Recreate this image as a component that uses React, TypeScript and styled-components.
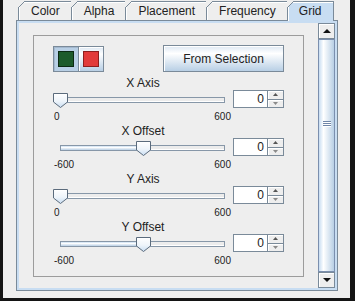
import styled, { createGlobalStyle } from "styled-components"

const OUTLINE = "#7a8a99"

type SliderSpec = {
    label: string,
    min: number,
    max: number,
    value: number
}

const tabs = ["Color", "Alpha", "Placement", "Frequency", "Grid"]
const activeTab = "Grid"

const sliders: SliderSpec[] = [
    { label: "X Axis", min: 0, max: 600, value: 0 },
    { label: "X Offset", min: -600, max: 600, value: 0 },
    { label: "Y Axis", min: 0, max: 600, value: 0 },
    { label: "Y Offset", min: -600, max: 600, value: 0 },
]

const GlobalStyle = createGlobalStyle`
    html, body {
        margin: 0;
        padding: 0;
        background: #eeeeee;
    }
    body {
        font-family: "Liberation Sans", Arial, sans-serif;
        font-size: 12px;
        color: #222222;
    }
`

function SliderThumb() {
    return (
        <svg width="15" height="15" viewBox="0 0 15 15">
            <defs>
                <linearGradient id="thumbFill" x1="0" y1="0" x2="0" y2="1">
                    <stop offset="0" stopColor="#ffffff" />
                    <stop offset="0.55" stopColor="#eef4fa" />
                    <stop offset="1" stopColor="#c8ddf2" />
                </linearGradient>
            </defs>
            <path d="M0.5 0.5 H14.5 V9 L7.5 14.5 L0.5 9 Z" fill="url(#thumbFill)" stroke="#5b6b7c" />
            <path d="M1.5 1.5 H13.5" stroke="#ffffff" />
        </svg>
    )
}

function Arrow({ up, size, color }: Readonly<{ up: boolean, size: number, color: string }>) {
    const h = Math.ceil(size / 2)
    return (
        <svg width={size} height={h} viewBox={`0 0 ${size} ${h}`}>
            <path d={up ? `M0 ${h} L${size / 2} 0 L${size} ${h} Z` : `M0 0 L${size / 2} ${h} L${size} 0 Z`} fill={color} />
        </svg>
    )
}

function Slider({ min, max, value }: Readonly<SliderSpec>) {
    const pct = (value - min) / (max - min)
    return (
        <SliderBox>
            <Track>
                <TrackFill style={{ width: `${pct * 100}%` }} />
            </Track>
            <ThumbSlot style={{ left: `calc(${pct} * (100% - 15px))` }}>
                <SliderThumb />
            </ThumbSlot>
        </SliderBox>
    )
}

function Spinner({ value }: Readonly<{ value: number }>) {
    return (
        <SpinnerBox>
            <SpinnerField>{value}</SpinnerField>
            <SpinnerButtons>
                <SpinButton><Arrow up={true} size={5} color="#555555" /></SpinButton>
                <SpinButton><Arrow up={false} size={5} color="#8a8a8a" /></SpinButton>
            </SpinnerButtons>
        </SpinnerBox>
    )
}

function App() {
    return (
        <Frame>
            <GlobalStyle />
            <Body>
                <EdgeV $w={3} />
                <Main>
                    <TabRow>
                        {tabs.map(t => (
                            <Tab key={t} $active={t === activeTab}>{t}</Tab>
                        ))}
                    </TabRow>
                    <TabPanel>
                        <ScrollPane>
                            <Viewport>
                                <GroupBox>
                                    <TopRow>
                                        <SwatchGroup>
                                            <SwatchButton $selected={true}>
                                                <Swatch $color="#1c5b2b" $edge="#0b2a13" />
                                            </SwatchButton>
                                            <SwatchButton>
                                                <Swatch $color="#e23a3a" $edge="#8c1e1e" />
                                            </SwatchButton>
                                        </SwatchGroup>
                                        <PushButton>From Selection</PushButton>
                                    </TopRow>
                                    {sliders.map(s => (
                                        <SliderRow key={s.label}>
                                            <RowLabel>{s.label}</RowLabel>
                                            <Slider {...s} />
                                            <Spinner value={s.value} />
                                            <TickLabels>
                                                <span>{s.min}</span>
                                                <span>{s.max}</span>
                                            </TickLabels>
                                        </SliderRow>
                                    ))}
                                </GroupBox>
                            </Viewport>
                            <ScrollBar>
                                <ScrollArrow><Arrow up={true} size={8} color="#111111" /></ScrollArrow>
                                <ScrollTrack>
                                    <ScrollThumb>
                                        <Grip />
                                        <Grip />
                                        <Grip />
                                    </ScrollThumb>
                                </ScrollTrack>
                                <ScrollArrow><Arrow up={false} size={8} color="#111111" /></ScrollArrow>
                            </ScrollBar>
                        </ScrollPane>
                    </TabPanel>
                </Main>
                <EdgeV $w={5} />
            </Body>
            <EdgeH />
        </Frame>
    )
}

const Frame = styled.div`
    width: 355px;
    height: 301px;
    display: flex;
    flex-direction: column;
    background: #eeeeee;
    overflow: hidden;
`

const Body = styled.div`
    flex: 1;
    display: flex;
    min-height: 0;
`

const EdgeV = styled.div<{ $w: number }>`
    width: ${({ $w }) => $w}px;
    background: #141414;
    flex-shrink: 0;
`

const EdgeH = styled.div`
    height: 3px;
    background: #141414;
    flex-shrink: 0;
`

const Main = styled.div`
    flex: 1;
    display: flex;
    flex-direction: column;
    padding: 1px 12px 7px 13px;
    min-width: 0;
`

const TabRow = styled.div`
    display: flex;
    align-items: flex-start;
    height: 19px;
    padding-left: 2px;
    position: relative;
    z-index: 1;
`

const Tab = styled.div<{ $active?: boolean }>`
    position: relative;
    box-sizing: border-box;
    height: ${({ $active }) => $active ? 20 : 19}px;
    display: flex;
    align-items: center;
    padding: ${({ $active }) => $active ? "0 12px 0 11px" : "0 11px 0 12px"};
    margin-right: -1px;
    border: 1px solid ${OUTLINE};
    border-bottom: none;
    background: ${({ $active }) => $active ? "#c8ddf2" : "#eeeeee"};
    box-shadow: inset 1px 1px 0 #ffffff;
    color: #222222;
    line-height: 14px;
    padding-bottom: 1px;
    &::before {
        content: "";
        position: absolute;
        top: -1px;
        left: -1px;
        width: 7px;
        height: 7px;
        background: linear-gradient(to bottom right, #eeeeee calc(50% - 0.6px), ${OUTLINE} calc(50% - 0.6px), ${OUTLINE} calc(50% + 0.6px), transparent calc(50% + 0.6px));
    }
`

const TabPanel = styled.div`
    flex: 1;
    display: flex;
    min-height: 0;
    border: 1px solid ${OUTLINE};
    padding: 2px;
    background: #c8ddf2;
`

const ScrollPane = styled.div`
    flex: 1;
    display: flex;
    min-height: 0;
    background: #eeeeee;
`

const Viewport = styled.div`
    flex: 1;
    padding: 12px 14px 11px 14px;
    overflow: hidden;
`

const GroupBox = styled.div`
    border: 1px solid #9c9c9c;
    padding: 9px 19px 8px 19px;
`

const TopRow = styled.div`
    display: flex;
    justify-content: space-between;
    align-items: center;
    height: 27px;
    margin-bottom: 4px;
`

const SwatchGroup = styled.div`
    display: flex;
`

const SwatchButton = styled.div<{ $selected?: boolean }>`
    box-sizing: border-box;
    width: 26px;
    height: 26px;
    margin-right: -1px;
    margin-top: 1px;
    display: flex;
    align-items: center;
    justify-content: center;
    border: 1px solid ${OUTLINE};
    background: ${({ $selected }) => $selected
        ? "#b8cfe5"
        : "linear-gradient(to bottom, #dde8f3 0%, #ffffff 30%, #b8cfe5 100%)"};
    box-shadow: ${({ $selected }) => $selected ? "inset 1px 1px 0 #a3b8cf" : "inset 1px 1px 0 #ffffff"};
`

const Swatch = styled.div<{ $color: string, $edge: string }>`
    box-sizing: border-box;
    width: 16px;
    height: 16px;
    background: ${({ $color }) => $color};
    border: 1px solid ${({ $edge }) => $edge};
`

const PushButton = styled.div`
    box-sizing: border-box;
    width: 121px;
    height: 27px;
    display: flex;
    align-items: center;
    justify-content: center;
    border: 1px solid ${OUTLINE};
    box-shadow: inset 1px 1px 0 #ffffff;
    background: linear-gradient(to bottom, #dde8f3 0%, #ffffff 30%, #b8cfe5 100%);
    color: #222222;
`

const SliderRow = styled.div`
    display: grid;
    grid-template-columns: 1fr 51px;
    grid-template-rows: 14px 20px 14px;
`

const RowLabel = styled.div`
    grid-column: 1;
    text-align: center;
    line-height: 14px;
`

const SliderBox = styled.div`
    grid-column: 1;
    grid-row: 2;
    position: relative;
`

const Track = styled.div`
    position: absolute;
    left: 7px;
    right: 8px;
    top: 7px;
    height: 6px;
    box-sizing: border-box;
    border: 1px solid #8797a8;
    background: #ececec;
    box-shadow: inset 0 -1px 0 #ffffff;
`

const TrackFill = styled.div`
    height: 100%;
    background: linear-gradient(to bottom, #c8ddf2 0%, #ffffff 35%, #b8cfe5 100%);
`

const ThumbSlot = styled.div`
    position: absolute;
    top: 3px;
    width: 15px;
    height: 15px;
    line-height: 0;
`

const TickLabels = styled.div`
    grid-column: 1;
    grid-row: 3;
    display: flex;
    justify-content: space-between;
    padding: 0 2px 0 1px;
    font-size: 10px;
    line-height: 14px;
    color: #222222;
`

const SpinnerBox = styled.div`
    grid-column: 2;
    grid-row: 2;
    display: flex;
    height: 18px;
    box-sizing: border-box;
`

const SpinnerField = styled.div`
    flex: 1;
    box-sizing: border-box;
    border: 1px solid ${OUTLINE};
    border-right: none;
    background: #ffffff;
    text-align: right;
    padding-right: 3px;
    line-height: 16px;
    font-size: 12px;
`

const SpinnerButtons = styled.div`
    width: 17px;
    display: flex;
    flex-direction: column;
`

const SpinButton = styled.div`
    flex: 1;
    box-sizing: border-box;
    display: flex;
    align-items: center;
    justify-content: center;
    border: 1px solid ${OUTLINE};
    background: #eeeeee;
    box-shadow: inset 1px 1px 0 #ffffff;
    &:last-child {
        border-top: none;
    }
`

const ScrollBar = styled.div`
    width: 17px;
    display: flex;
    flex-direction: column;
    background: #eeeeee;
`

const ScrollArrow = styled.div`
    height: 16px;
    box-sizing: border-box;
    display: flex;
    align-items: center;
    justify-content: center;
    border: 1px solid ${OUTLINE};
    background: #eeeeee;
    box-shadow: inset 1px 1px 0 #ffffff;
`

const ScrollTrack = styled.div`
    flex: 1;
    display: flex;
    flex-direction: column;
    border-left: 1px solid ${OUTLINE};
    border-right: 1px solid ${OUTLINE};
`

const ScrollThumb = styled.div`
    flex: 1;
    margin: 0 -1px;
    box-sizing: border-box;
    border: 1px solid #7b8fae;
    background: linear-gradient(to right, #c8ddf2 0%, #ffffff 30%, #b8cfe5 100%);
    display: flex;
    flex-direction: column;
    align-items: center;
    padding-top: 81px;
    gap: 1px;
`

const Grip = styled.div`
    width: 8px;
    height: 1px;
    background: #6f86a8;
    box-shadow: 0 1px 0 #ffffff;
`

export default App
